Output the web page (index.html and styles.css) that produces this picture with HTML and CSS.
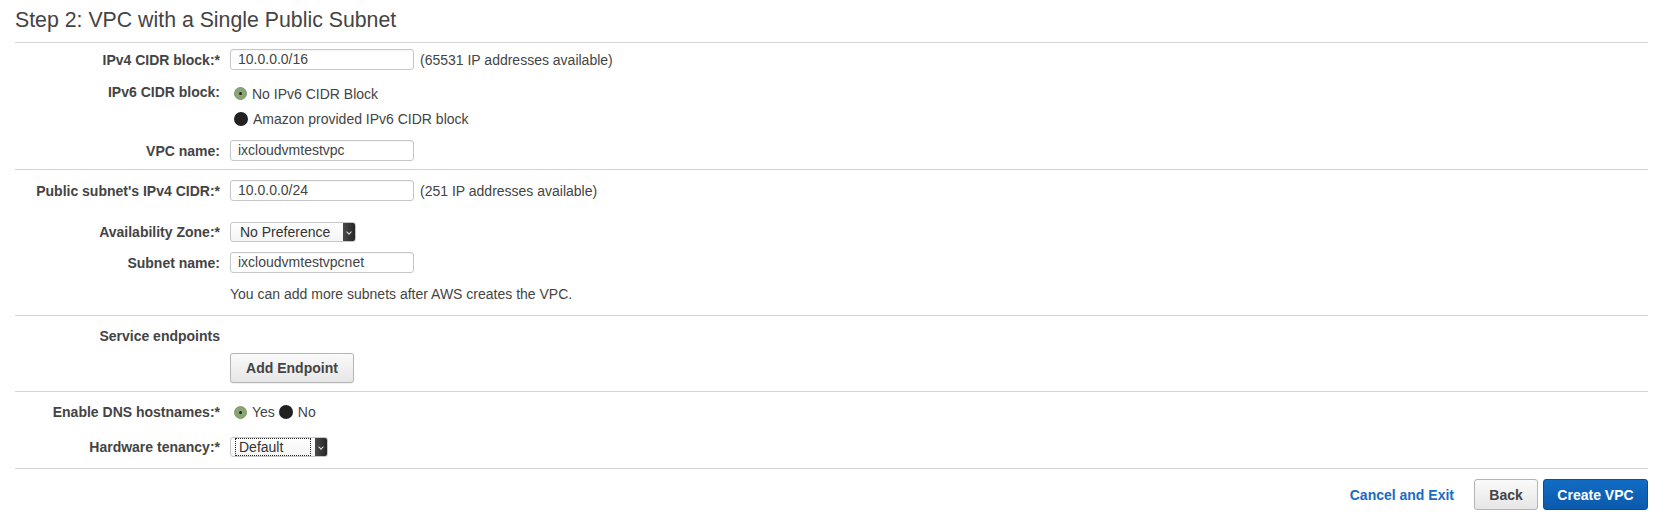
FILE: index.html
```html
<!DOCTYPE html>
<html>
<head>
<meta charset="utf-8">
<link rel="stylesheet" href="styles.css">
</head>
<body>
<div class="page">
  <h1 class="title">Step 2: VPC with a Single Public Subnet</h1>

  <div class="section s1">
    <div class="row">
      <div class="label">IPv4 CIDR block:*</div>
      <div class="field"><span class="input">10.0.0.0/16</span><span class="note">(65531 IP addresses available)</span></div>
    </div>
    <div class="row row-top gap-ipv6">
      <div class="label lh24">IPv6 CIDR block:</div>
      <div class="field col">
        <div class="opt"><span class="radio on"></span>No IPv6 CIDR Block</div>
        <div class="opt"><span class="radio off"></span>Amazon provided IPv6 CIDR block</div>
      </div>
    </div>
    <div class="row gap-vpcname">
      <div class="label">VPC name:</div>
      <div class="field"><span class="input">ixcloudvmtestvpc</span></div>
    </div>
  </div>

  <div class="section s2">
    <div class="row">
      <div class="label">Public subnet's IPv4 CIDR:*</div>
      <div class="field"><span class="input">10.0.0.0/24</span><span class="note">(251 IP addresses available)</span></div>
    </div>
    <div class="row gap-az">
      <div class="label">Availability Zone:*</div>
      <div class="field"><span class="select sel-az"><span class="sel-text">No Preference</span><span class="arrow"></span></span></div>
    </div>
    <div class="row gap-sn">
      <div class="label">Subnet name:</div>
      <div class="field"><span class="input">ixcloudvmtestvpcnet</span></div>
    </div>
    <div class="row gap-help">
      <div class="label"></div>
      <div class="field help">You can add more subnets after AWS creates the VPC.</div>
    </div>
  </div>

  <div class="section s3">
    <div class="row">
      <div class="label">Service endpoints</div>
      <div class="field"></div>
    </div>
    <div class="row gap-btn">
      <div class="label"></div>
      <div class="field"><button class="btn btn-grey add">Add Endpoint</button></div>
    </div>
  </div>

  <div class="section s4">
    <div class="row">
      <div class="label">Enable DNS hostnames:*</div>
      <div class="field"><span class="radio on"></span><span class="rtext">Yes</span><span class="radio off"></span><span class="rtext">No</span></div>
    </div>
    <div class="row gap-hw">
      <div class="label">Hardware tenancy:*</div>
      <div class="field"><span class="select sel-hw"><span class="sel-text focus">Default</span><span class="arrow"></span></span></div>
    </div>
  </div>

  <div class="footer">
    <a class="link">Cancel and Exit</a>
    <button class="btn btn-grey back">Back</button>
    <button class="btn btn-blue create">Create VPC</button>
  </div>
</div>
</body>
</html>
```

FILE: styles.css
```css
html, body {
  margin: 0;
  padding: 0;
  background: #fff;
}
body {
  font-family: "Liberation Sans", Arial, sans-serif;
  font-size: 14px;
  color: #444;
}
.page {
  padding: 0 20px 0 15px;
}
.title {
  margin: 0;
  padding: 8px 0 10px;
  font-size: 21.3px;
  line-height: 24px;
  font-weight: normal;
  color: #444;
  border-bottom: 1px solid #d5d5d5;
}
.section {
  border-bottom: 1px solid #d5d5d5;
}
.s1 { padding: 6px 0 8px; }
.s2 { padding: 10px 0 11px; }
.s3 { padding: 10px 0 8px; }
.s4 { padding: 10px 0 11px; }

.row {
  display: grid;
  grid-template-columns: 205px 1fr;
  column-gap: 10px;
  align-items: center;
}
.row-top { align-items: start; }
.gap-ipv6 { margin-top: 11px; }
.gap-vpcname { margin-top: 9px; }
.gap-az { margin-top: 21px; }
.gap-sn { margin-top: 10px; }
.gap-help { margin-top: 11px; }
.gap-btn { margin-top: 7px; }
.gap-hw { margin-top: 15px; }

.label {
  text-align: right;
  font-weight: bold;
  color: #444;
  line-height: 20px;
}
.lh24 { line-height: 22px; }
.field {
  display: flex;
  align-items: center;
  line-height: 20px;
}
.field.col {
  flex-direction: column;
  align-items: flex-start;
}
.input {
  box-sizing: border-box;
  width: 184px;
  height: 21px;
  border: 1px solid #c6c6c6;
  border-radius: 3px;
  padding: 0 7px;
  line-height: 19px;
  color: #444;
  box-shadow: inset 0 1px 1px rgba(0,0,0,0.04);
}
.note {
  margin-left: 6px;
}
.opt {
  display: flex;
  align-items: center;
  height: 25px;
}
.radio {
  display: inline-block;
  box-sizing: border-box;
  width: 13px;
  height: 13px;
  border-radius: 50%;
  margin: 0 5px 0 4px;
  flex: none;
}
.radio.on {
  background: #8aa476;
  border: 1px solid #7f9a6c;
  position: relative;
}
.radio.on::after {
  content: "";
  position: absolute;
  left: 4px;
  top: 4px;
  width: 3px;
  height: 3px;
  border-radius: 50%;
  background: #222;
}
.radio.off {
  background: #222;
  width: 14px;
  height: 14px;
  margin-left: 4px;
}

.select {
  box-sizing: border-box;
  display: inline-flex;
  align-items: stretch;
  height: 20px;
  border: 1px solid #c6c6c6;
  border-radius: 3px;
  background: linear-gradient(#fff, #f4f4f4);
  overflow: hidden;
}
.sel-az { width: 126px; }
.sel-hw { width: 98px; }
.sel-text {
  flex: 1;
  padding-left: 9px;
  line-height: 18px;
  color: #333;
}
.sel-hw .sel-text {
  margin: 1px 5px 1px 5px;
  line-height: 16px;
  padding-left: 3px;
}
.focus {
  outline: 1px dotted #222;
}
.arrow {
  width: 12px;
  background: linear-gradient(90deg, #4a4a4a, #262626);
  position: relative;
  flex: none;
}
.arrow::after {
  content: "";
  position: absolute;
  left: 4px;
  top: 7px;
  width: 3px;
  height: 3px;
  border-right: 1px solid #ddd;
  border-bottom: 1px solid #ddd;
  transform: rotate(45deg);
}
.help {
  color: #444;
}

.btn {
  font-family: "Liberation Sans", Arial, sans-serif;
  font-size: 14px;
  font-weight: bold;
  border-radius: 3px;
  cursor: pointer;
  box-sizing: border-box;
}
.btn-grey {
  color: #444;
  border: 1px solid #b4b4b4;
  background: linear-gradient(#fafafa, #e6e6e6);
  box-shadow: 0 1px 1px rgba(0,0,0,0.06);
}
.add {
  width: 124px;
  height: 30px;
  padding: 0;
}
.footer {
  display: flex;
  justify-content: flex-end;
  align-items: center;
  padding-top: 10px;
}
.link {
  color: #1a6bc1;
  font-weight: bold;
  margin-right: 20px;
}
.back {
  width: 64px;
  height: 31px;
  padding: 0;
  margin-right: 5px;
}
.btn-blue {
  color: #fff;
  border: 1px solid #0a4f98;
  background: linear-gradient(#126cc4, #0a5aab);
}
.create {
  width: 105px;
  height: 31px;
  padding: 0;
}
```
